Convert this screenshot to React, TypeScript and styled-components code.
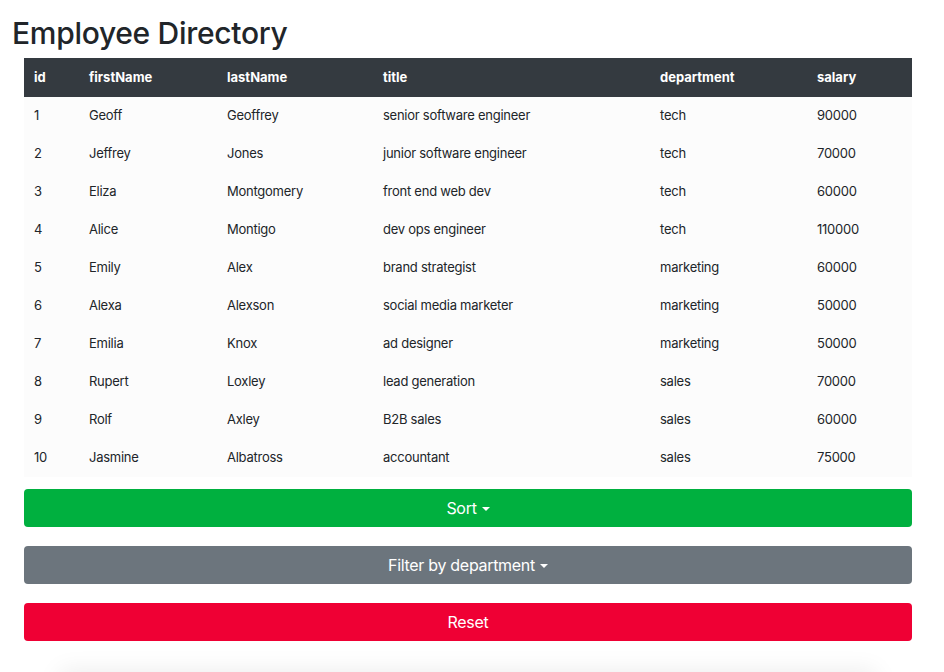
import React from "react";
import styled, { createGlobalStyle } from "styled-components";

const Global = createGlobalStyle`
  html, body { margin: 0; padding: 0; background: #ffffff; }
  body {
    font-family: Inter, "Noto Sans", "Liberation Sans", sans-serif;
    color: #212529;
    overflow: hidden;
  }
  * { box-sizing: border-box; }
`;

const Page = styled.div`
  padding: 12px 12px 0 12px;
  height: 672px;
  overflow: hidden;
`;

const Title = styled.h1`
  margin: 0 0 4px 0;
  font-size: 30px;
  line-height: 42px;
  font-weight: 500;
  letter-spacing: -0.3px;
  color: #212529;
`;

const Content = styled.div`
  padding: 0 20px 0 12px;
  display: flex;
  flex-direction: column;
`;

const Table = styled.table`
  width: 100%;
  table-layout: fixed;
  border-collapse: collapse;
  background: #fcfcfc;
  font-size: 13px;
`;

const HeadCell = styled.th`
  background: #343a40;
  color: #ffffff;
  font-weight: 700;
  text-align: left;
  padding: 10px 10px;
  height: 39px;
  line-height: 19px;
`;

const Cell = styled.td`
  padding: 9px 10px 11px;
  height: 38px;
  line-height: 18px;
  letter-spacing: -0.25px;
  color: #212529;
`;

const Buttons = styled.div`
  display: flex;
  flex-direction: column;
  gap: 19px;
  margin-top: 12px;
`;

const Button = styled.button<{ $bg: string }>`
  height: 38px;
  width: 100%;
  border: none;
  border-radius: 4px;
  background: ${(p) => p.$bg};
  color: #ffffff;
  font-family: Inter, "Noto Sans", "Liberation Sans", sans-serif;
  font-size: 16px;
  letter-spacing: -0.3px;
  display: flex;
  align-items: center;
  justify-content: center;
  gap: 5px;
  cursor: pointer;
`;

const Caret = styled.span`
  display: inline-block;
  width: 0;
  height: 0;
  border-left: 4px solid transparent;
  border-right: 4px solid transparent;
  border-top: 4.5px solid #ffffff;
  margin-top: 1px;
`;

const Below = styled.div`
  margin: 34px 56px 0 48px;
  height: 40px;
  background: #ffffff;
  box-shadow: 0 -4px 24px rgba(0, 0, 0, 0.08);
`;

const employees = [
  [1, "Geoff", "Geoffrey", "senior software engineer", "tech", 90000],
  [2, "Jeffrey", "Jones", "junior software engineer", "tech", 70000],
  [3, "Eliza", "Montgomery", "front end web dev", "tech", 60000],
  [4, "Alice", "Montigo", "dev ops engineer", "tech", 110000],
  [5, "Emily", "Alex", "brand strategist", "marketing", 60000],
  [6, "Alexa", "Alexson", "social media marketer", "marketing", 50000],
  [7, "Emilia", "Knox", "ad designer", "marketing", 50000],
  [8, "Rupert", "Loxley", "lead generation", "sales", 70000],
  [9, "Rolf", "Axley", "B2B sales", "sales", 60000],
  [10, "Jasmine", "Albatross", "accountant", "sales", 75000],
];

const columns = ["id", "firstName", "lastName", "title", "department", "salary"];
const widths = [55, 138, 156, 277, 157, 105];

export default function App() {
  return (
    <>
      <Global />
      <Page>
        <Title>Employee Directory</Title>
        <Content>
          <Table>
            <colgroup>
              {widths.map((w, i) => (
                <col key={i} style={{ width: w }} />
              ))}
            </colgroup>
            <thead>
              <tr>
                {columns.map((c) => (
                  <HeadCell key={c}>{c}</HeadCell>
                ))}
              </tr>
            </thead>
            <tbody>
              {employees.map((e) => (
                <tr key={e[0] as number}>
                  {e.map((v, i) => (
                    <Cell key={i}>{v}</Cell>
                  ))}
                </tr>
              ))}
            </tbody>
          </Table>
          <Buttons>
            <Button $bg="#00b03f">
              Sort <Caret />
            </Button>
            <Button $bg="#6c757d">
              Filter by department <Caret />
            </Button>
            <Button $bg="#ef0034">Reset</Button>
          </Buttons>
        </Content>
        <Below />
      </Page>
    </>
  );
}
